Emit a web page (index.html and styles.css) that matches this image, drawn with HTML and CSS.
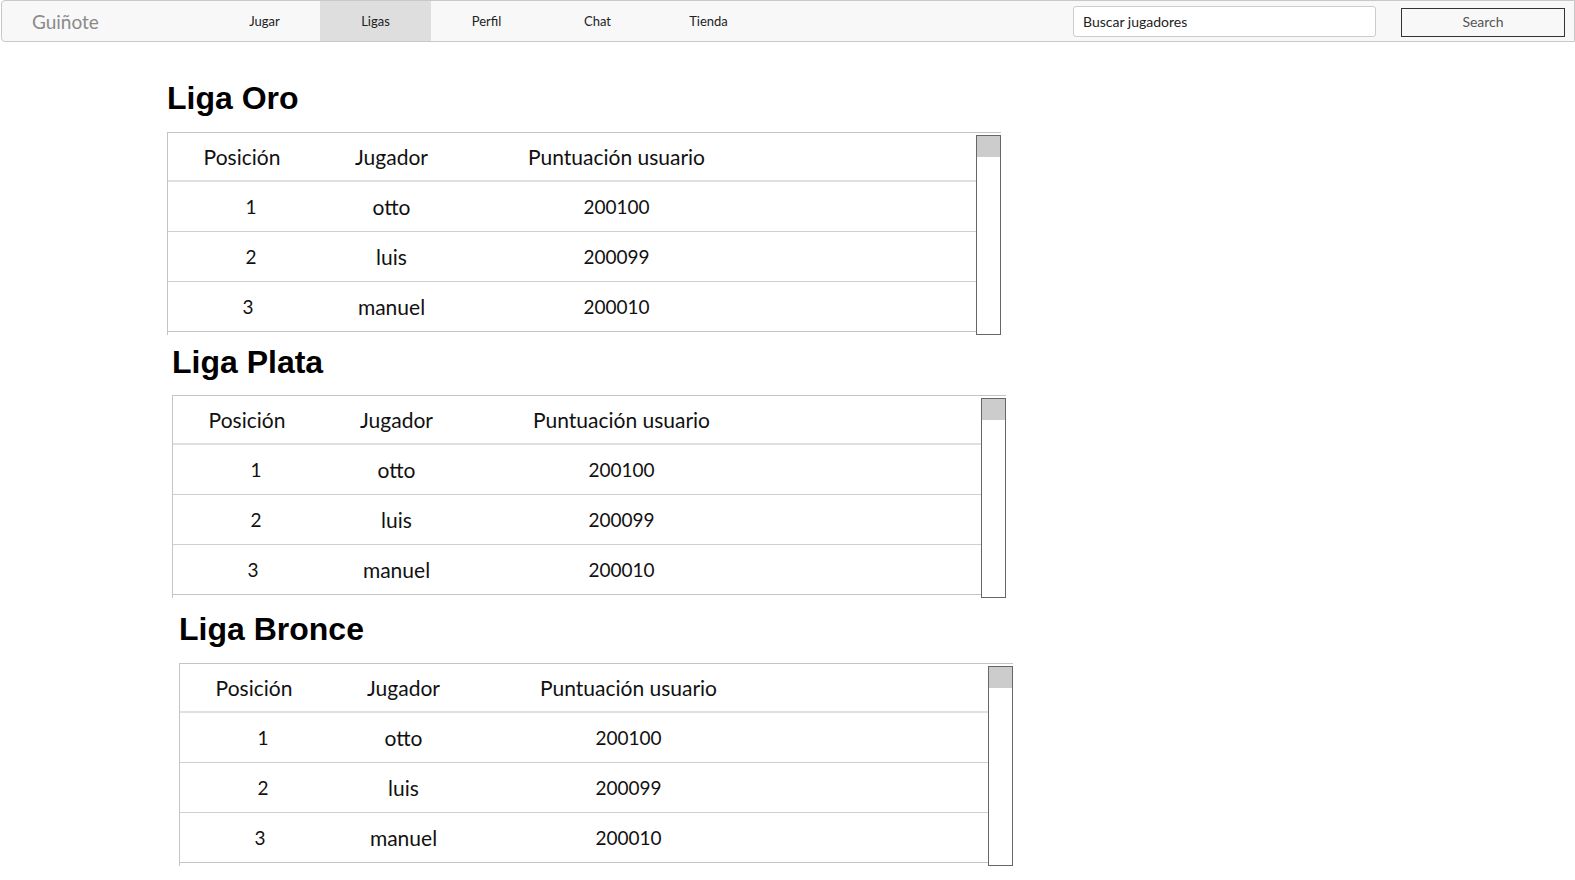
FILE: index.html
```html
<!DOCTYPE html>
<html lang="es">
<head>
<meta charset="utf-8">
<title>Guiñote - Ligas</title>
<link rel="stylesheet" href="styles.css">
</head>
<body>
<header class="navbar">
  <div class="brand">Guiñote</div>
  <nav class="nav">
    <a class="nav-item">Jugar</a>
    <a class="nav-item active">Ligas</a>
    <a class="nav-item">Perfil</a>
    <a class="nav-item">Chat</a>
    <a class="nav-item">Tienda</a>
  </nav>
  <form class="search">
    <input class="search-input" type="text" value="Buscar jugadores">
    <button class="search-btn" type="button">Search</button>
  </form>
</header>

<main class="main">
  <section class="league league-oro">
    <h2 class="league-title">Liga Oro</h2>
    <div class="table-wrap">
      <div class="table">
        <div class="row head"><span class="c1">Posición</span><span class="c2">Jugador</span><span class="c3">Puntuación usuario</span></div>
        <div class="row"><span class="c1 num">1</span><span class="c2">otto</span><span class="c3 num">200100</span></div>
        <div class="row"><span class="c1 num">2</span><span class="c2">luis</span><span class="c3 num">200099</span></div>
        <div class="row last"><span class="c1 num n3">3</span><span class="c2">manuel</span><span class="c3 num">200010</span></div>
      </div>
      <div class="scrollbar"><div class="thumb"></div></div>
    </div>
  </section>

  <section class="league league-plata">
    <h2 class="league-title">Liga Plata</h2>
    <div class="table-wrap">
      <div class="table">
        <div class="row head"><span class="c1">Posición</span><span class="c2">Jugador</span><span class="c3">Puntuación usuario</span></div>
        <div class="row"><span class="c1 num">1</span><span class="c2">otto</span><span class="c3 num">200100</span></div>
        <div class="row"><span class="c1 num">2</span><span class="c2">luis</span><span class="c3 num">200099</span></div>
        <div class="row last"><span class="c1 num n3">3</span><span class="c2">manuel</span><span class="c3 num">200010</span></div>
      </div>
      <div class="scrollbar"><div class="thumb"></div></div>
    </div>
  </section>

  <section class="league league-bronce">
    <h2 class="league-title">Liga Bronce</h2>
    <div class="table-wrap">
      <div class="table">
        <div class="row head"><span class="c1">Posición</span><span class="c2">Jugador</span><span class="c3">Puntuación usuario</span></div>
        <div class="row"><span class="c1 num">1</span><span class="c2">otto</span><span class="c3 num">200100</span></div>
        <div class="row"><span class="c1 num">2</span><span class="c2">luis</span><span class="c3 num">200099</span></div>
        <div class="row last"><span class="c1 num n3">3</span><span class="c2">manuel</span><span class="c3 num">200010</span></div>
      </div>
      <div class="scrollbar"><div class="thumb"></div></div>
    </div>
  </section>
</main>
</body>
</html>
```

FILE: styles.css
```css
* { box-sizing: border-box; }

html, body {
  margin: 0;
  padding: 0;
  background: #ffffff;
  font-family: Lato, "Open Sans", "Liberation Sans", sans-serif;
  color: #111;
}

.navbar {
  display: flex;
  align-items: stretch;
  height: 42px;
  margin-left: 1px;
  border: 1px solid #c8c8c8;
  border-radius: 4px 0 0 4px;
  background: #f8f8f8;
  padding-right: 9px;
}

.brand {
  width: 207px;
  padding-left: 30px;
  display: flex;
  align-items: center;
  font-size: 19px;
  color: #8a8a8a;
}

.nav {
  display: flex;
}

.nav-item {
  width: 111px;
  display: flex;
  align-items: center;
  justify-content: center;
  font-size: 13px;
  color: #222;
  text-decoration: none;
}

.nav-item.active {
  background: #dedede;
}

.search {
  margin: 0 0 0 auto;
  display: flex;
  align-items: center;
  gap: 25px;
}

.search-input {
  width: 303px;
  height: 31px;
  border: 1px solid #cccccc;
  border-radius: 3px;
  background: #ffffff;
  padding: 0 9px;
  font-family: inherit;
  font-size: 14px;
  color: #222;
  margin-top: 1px;
}

.search-btn {
  width: 164px;
  height: 29px;
  border: 1px solid #333;
  background: #f8f8f8;
  font-family: inherit;
  font-size: 14px;
  color: #555;
  padding: 0 0 2px;
  margin-top: 3px;
}

.main {
  padding-top: 38px;
}

.league-oro { margin-left: 167px; }
.league-plata { margin-left: 172px; margin-top: 9px; }
.league-bronce { margin-left: 179px; margin-top: 13px; }

.league-title {
  margin: 0;
  font-family: "Liberation Sans", Arial, sans-serif;
  font-weight: bold;
  font-size: 32px;
  line-height: 36px;
  color: #000;
}

.league-oro .league-title { margin-bottom: 16px; }
.league-plata .league-title { margin-bottom: 15px; }
.league-bronce .league-title { margin-bottom: 16px; }

.table-wrap {
  display: flex;
  width: 834px;
  border-top: 1px solid #c4c4c4;
}

.table {
  width: 812px;
  border-left: 1px solid #c4c4c4;
}

.row {
  display: grid;
  grid-template-columns: 166px 115px 335px 1fr;
  height: 50px;
  align-items: center;
  border-bottom: 1px solid #cfcfcf;
  font-size: 21px;
  color: #111;
}

.row:first-child {
  height: 49px;
}

.row.head {
  border-bottom: 2px solid #e0e0e0;
}

.row.last {
  border-bottom: 1px solid #c4c4c4;
}

.row span {
  text-align: center;
  line-height: 24px;
}

.row .num {
  font-size: 19px;
}

.row.head .c1 {
  padding-right: 18px;
}

.row .c1.n3 {
  padding-right: 6px;
}

.scrollbar {
  width: 25px;
  height: 200px;
  margin-top: 2px;
  border: 1px solid #666;
  background: #fff;
  flex-shrink: 0;
}

.thumb {
  height: 21px;
  background: #cccccc;
}
```
